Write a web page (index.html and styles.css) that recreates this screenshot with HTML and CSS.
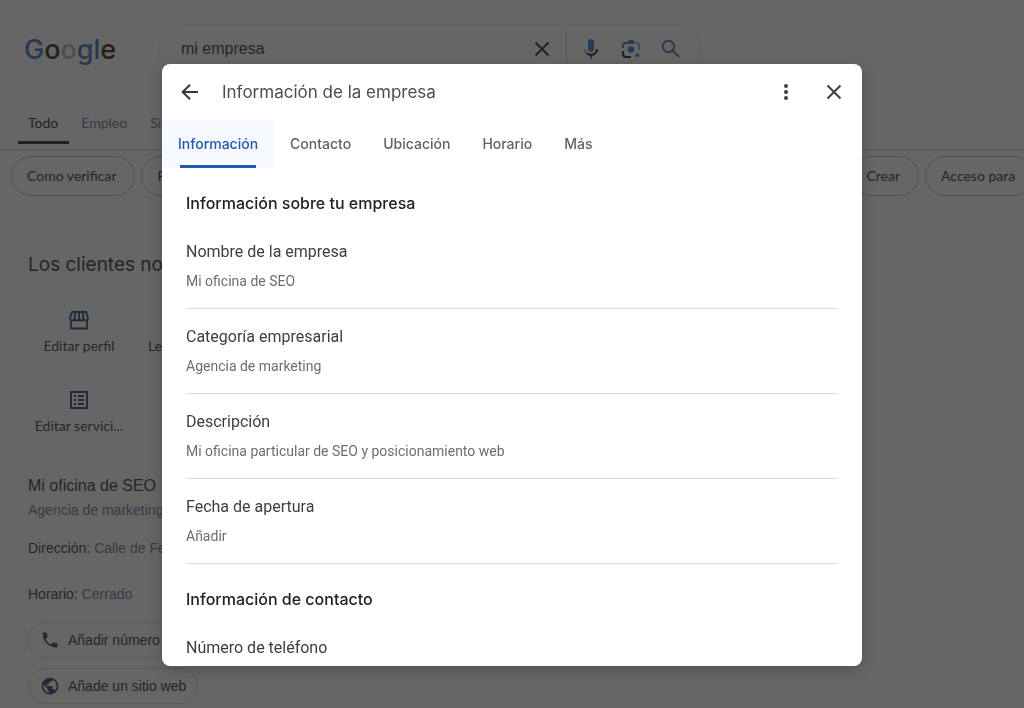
FILE: index.html
```html
<!DOCTYPE html>
<html lang="es">
<head>
<meta charset="utf-8">
<title>mi empresa</title>
<link rel="stylesheet" href="styles.css">
</head>
<body>
<div class="page">
  <header class="top">
    <a class="logo" href="#" aria-label="Google"><span class="c-blue">G</span><span class="c-dark">o</span><span class="c-grey">o</span><span class="c-blue">gl</span><span class="c-dark">e</span></a>
    <form class="search">
      <input class="search-input" type="text" value="mi empresa" aria-label="Buscar">
      <button class="search-btn clear" type="button" aria-label="Borrar">
        <svg width="24" height="24" viewBox="0 0 24 24" fill="none" stroke="#1e2024" stroke-width="1.9"><path d="M5.500 5.500l13 13M18.500 5.500l-13 13"/></svg>
      </button>
      <button class="search-btn" type="button" aria-label="Buscar por voz">
        <svg width="24" height="24" viewBox="0 0 24 24"><path fill="#273a5c" d="M12 15c1.660 0 3-1.310 3-2.970V5C15 3.340 13.660 2 12 2S9 3.340 9 5v7.030C9 13.690 10.340 15 12 15z"/><path fill="#2c3a4e" d="M11 18.080h2V22h-2z"/><path fill="#4c4c4c" d="M7 12H5c0 1.930.78 3.680 2.050 4.950l1.410-1.410C7.560 14.630 7 13.390 7 12z"/><path fill="#231f20" d="M12 16.870c-1.370 0-2.610-.57-3.510-1.470l-1.410 1.410C8.350 18.080 10.090 19 12 19c3.870 0 7-3.140 7-7h-2c0 2.750-2.240 4.870-5 4.870z"/></svg>
      </button>
      <button class="search-btn" type="button" aria-label="Buscar por imagen">
        <svg width="24" height="24" viewBox="0 0 24 24" fill="none" stroke-width="2"><path stroke="#273a5c" d="M4 11V8.500q0-2.500 2.500-2.500H9M15 6H9"/><path fill="#273a5c" d="M8 6l1.800-3h4.400L16 6z"/><path stroke="#4c4c4c" d="M16 6h1.500q2.500 0 2.500 2.500V13"/><path stroke="#231f20" d="M4 14v3q0 3 3 3h5"/><circle cx="12" cy="12.500" r="3.200" fill="#273a5c"/><circle cx="18.300" cy="18.300" r="2" fill="#2e4258"/></svg>
      </button>
      <button class="search-btn" type="submit" aria-label="Buscar">
        <svg width="24" height="24" viewBox="0 0 24 24" fill="none" stroke="#2b3a50" stroke-width="2"><circle cx="9.500" cy="9.500" r="5.700"/><path d="M13.700 13.700l6.300 6.300"/></svg>
      </button>
    </form>
  </header>
  <nav class="tabs">
    <a class="tab active" href="#">Todo</a>
    <a class="tab" href="#">Empleo</a>
    <a class="tab" href="#">Si</a>
  </nav>
  <div class="chips">
    <a class="chip" href="#">Como verificar</a>
    <a class="chip long" href="#">F</a>
    <a class="chip" href="#">Crear</a>
    <a class="chip" href="#">Acceso para</a>
  </div>
  <main class="panel">
    <h2 class="panel-title">Los clientes no</h2>
    <div class="actions">
      <a class="action" href="#">
        <svg width="24" height="24" viewBox="0 0 24 24" fill="none" stroke="#222b3a" stroke-width="1.800"><path d="M5 4h14l2 6q0 2.500-2.250 2.500T16.500 10q0 2.500-2.250 2.500T12 10Q12 12.500 9.750 12.500T7.500 10Q7.500 12.500 5.250 12.500T3 10zM8.500 4l-1 6M12 4v6M15.500 4l1 6M4 12v8.500h16V12"/></svg>
        Editar perfil</a>
      <a class="action wide" href="#"><span class="blank"></span>Le</a>
      <a class="action" href="#">
        <svg width="24" height="24" viewBox="0 0 24 24" fill="none" stroke="#222b3a" stroke-width="2"><path d="M4 4h16v16H4zM7 8h2M7 12h2M7 16h2M11 8h6M11 12h6M11 16h6"/></svg>
        Editar servici...</a>
    </div>
    <h3 class="biz">Mi oficina de SEO</h3>
    <p class="cat">Agencia de marketing</p>
    <p class="fact"><span class="key">Dirección:</span> Calle de Fe</p>
    <p class="fact hours"><span class="key">Horario:</span> Cerrado</p>
    <div class="pills">
      <button class="pill" type="button">
        <svg width="20" height="20" viewBox="0 0 24 24" fill="#222a38"><path d="M6.620 10.790c1.440 2.830 3.760 5.140 6.590 6.590l2.200-2.200c.27-.27.67-.36 1.020-.24 1.120.37 2.330.57 3.570.57.55 0 1 .45 1 1V20c0 .55-.45 1-1 1-9.390 0-17-7.610-17-17 0-.55.45-1 1-1h3.500c.55 0 1 .45 1 1 0 1.250.2 2.450.57 3.570.11.35.03.74-.25 1.020l-2.200 2.200z"/></svg>
        Añadir número</button>
      <button class="pill" type="button">
        <svg width="20" height="20" viewBox="0 0 24 24" fill="#222a38"><path d="M12 2C6.480 2 2 6.480 2 12s4.480 10 10 10 10-4.480 10-10S17.520 2 12 2zm-1 17.930c-3.950-.49-7-3.850-7-7.930 0-.62.08-1.210.21-1.790L9 15v1c0 1.100.9 2 2 2v1.930zm6.900-2.540c-.26-.81-1-1.390-1.900-1.390h-1v-3c0-.55-.45-1-1-1H8v-2h2c.55 0 1-.45 1-1V7h2c1.100 0 2-.9 2-2v-.41c2.930 1.190 5 4.060 5 7.410 0 2.080-.8 3.970-2.100 5.390z"/></svg>
        Añade un sitio web</button>
    </div>
  </main>
</div>

<div class="overlay">
  <section class="dialog" role="dialog" aria-modal="true" aria-labelledby="dialog-title">
    <header class="dialog-head">
      <button class="icon-btn" type="button" aria-label="Atrás">
        <svg width="24" height="24" viewBox="0 0 24 24" fill="none" stroke="#2f3844" stroke-width="2"><path d="M20 12H5.500M12 4.700L4.700 12l7.300 7.300"/></svg>
      </button>
      <h1 class="dialog-title" id="dialog-title">Información de la empresa</h1>
      <button class="icon-btn" type="button" aria-label="Más opciones">
        <svg width="24" height="24" viewBox="0 0 24 24" fill="#3c4043"><circle cx="12" cy="6" r="2"/><circle cx="12" cy="12" r="2"/><circle cx="12" cy="18" r="2"/></svg>
      </button>
      <button class="icon-btn" type="button" aria-label="Cerrar">
        <svg width="24" height="24" viewBox="0 0 24 24" fill="none" stroke="#3c4043" stroke-width="2"><path d="M5.500 5.500l13 13M18.500 5.500l-13 13"/></svg>
      </button>
    </header>
    <nav class="dtabs">
      <button class="dtab current" type="button">Información</button>
      <button class="dtab" type="button">Contacto</button>
      <button class="dtab" type="button">Ubicación</button>
      <button class="dtab" type="button">Horario</button>
      <button class="dtab" type="button">Más</button>
    </nav>
    <div class="dialog-body">
      <h2 class="section">Información sobre tu empresa</h2>
      <div class="field"><h3>Nombre de la empresa</h3><p>Mi oficina de SEO</p></div>
      <div class="field"><h3>Categoría empresarial</h3><p>Agencia de marketing</p></div>
      <div class="field"><h3>Descripción</h3><p>Mi oficina particular de SEO y posicionamiento web</p></div>
      <div class="field"><h3>Fecha de apertura</h3><p>Añadir</p></div>
      <h2 class="section">Información de contacto</h2>
      <div class="field"><h3>Número de teléfono</h3></div>
    </div>
  </section>
</div>
</body>
</html>
```
FILE: styles.css
```css
:root {
  --display: Inter, "Open Sans", sans-serif;
  --label: Lato, "Open Sans", sans-serif;
  --ui: Roboto, "Liberation Sans", sans-serif;
  --arial: "Liberation Sans", Arial, sans-serif;
  --ink: #232529;
  --ink-soft: #323b47;
  --line: #4f5052;
}

* { box-sizing: border-box; }

body {
  margin: 0;
  height: 100vh;
  overflow: hidden;
  background: #666;
  color: var(--ink);
  font-family: var(--arial);
}

h1, h2, h3, p { margin: 0; font-weight: 400; }
a { color: inherit; text-decoration: none; }
button { border: 0; padding: 0; background: none; color: inherit; font: inherit; cursor: pointer; }
svg { display: block; flex: none; }

.page { height: 100%; overflow: hidden; }

.top { display: flex; align-items: center; padding: 26px 24px 0; }
.logo { width: 136px; padding-top: 2px; font: 500 27px/40px var(--display); }
.c-blue { color: #27384f; }
.c-dark { color: #231f20; }
.c-grey { color: #4e4e4e; }

.search {
  display: flex;
  align-items: center;
  width: 540px;
  height: 46px;
  padding: 0 9px 0 21px;
  border-radius: 24px;
  box-shadow: 0 1px 5px rgba(20, 22, 26, .1);
}
.search-input { flex: 1; min-width: 0; border: 0; padding: 0; background: none; color: var(--ink); font: 16px/24px var(--arial); }
.search-btn { padding: 0 8px; }
.clear { padding: 6px 12px; margin-right: 4px; border-right: 1px solid #555; }

.tabs { display: flex; height: 54px; margin-top: 24px; padding-left: 18px; border-bottom: 1px solid #555; }
.tab { height: 48px; padding: 17px 11px 0 10px; margin-right: 2px; color: var(--ink-soft); font: 14px/20px var(--label); }
.tab.active { color: #1f1f20; border-bottom: 3px solid #231f20; }

.chips { display: flex; gap: 6px; padding: 6px 11px; }
.chip { flex: none; height: 40px; padding: 0 18px 0 15px; border: 1px solid var(--line); border-radius: 20px; font: 14px/38px var(--label); }
.chip.long { width: 703px; }

.panel { padding: 0 24px 0 28px; }
.panel-title { margin-top: 49px; font: 19px/28px var(--display); }
.actions { display: grid; grid-template-columns: repeat(2, 110px); margin: 29px 0 0 -4px; }
.action { display: flex; flex-direction: column; align-items: center; gap: 4px; height: 80px; color: #24272e; font: 14px/20px var(--label); }
.action.wide { align-items: flex-start; padding-left: 14px; }
.blank { height: 24px; }
.biz { margin-top: 6px; font-size: 16px; line-height: 24px; }
.cat { margin-top: 2px; color: var(--ink-soft); font-size: 14px; line-height: 20px; }
.fact { margin-top: 18px; color: var(--ink-soft); font-size: 14px; line-height: 20px; }
.hours { margin-top: 26px; }
.key { color: var(--ink); }
.pills { display: flex; flex-direction: column; align-items: flex-start; gap: 10px; margin-top: 18px; }
.pill { display: flex; align-items: center; gap: 8px; height: 36px; padding: 0 11px; border: 1px solid #5a5a5a; border-radius: 18px; font-size: 14px; }

.overlay { position: fixed; inset: 0; display: flex; justify-content: center; padding: 64px 16px 42px; }
.dialog {
  display: flex;
  flex-direction: column;
  width: 100%;
  max-width: 700px;
  overflow: hidden;
  border-radius: 8px;
  background: #fff;
  box-shadow: 0 4px 16px rgba(0, 0, 0, .2);
}
.dialog-head { display: flex; flex: none; align-items: center; gap: 24px; height: 56px; padding: 0 16px; }
.dialog-title { flex: 1; margin-left: -4px; color: #4a4d51; font: 17px/24px var(--display); }

.dtabs { display: flex; flex: none; height: 48px; }
.dtab { padding: 0 16px; color: #5f6368; font: 500 14px/48px var(--display); }
.dtab.current {
  color: #2456b0;
  background: #f6fafe linear-gradient(#2456b0, #2456b0) center bottom / calc(100% - 36px) 3px no-repeat;
}

.dialog-body { flex: 1; min-height: 0; overflow: hidden; padding: 0 24px; }
.section { padding: 23px 0 13px; color: #202124; font: 500 16px/24px var(--display); }
.field { padding: 12px 0 17px; border-bottom: 1px solid #dadce0; font-family: var(--ui); }
.field + .field { padding-top: 16px; }
.field h3 { color: #3c4043; font-size: 16px; line-height: 24px; }
.field p { margin-top: 7px; color: #6a6e73; font-size: 14px; line-height: 20px; }
```
